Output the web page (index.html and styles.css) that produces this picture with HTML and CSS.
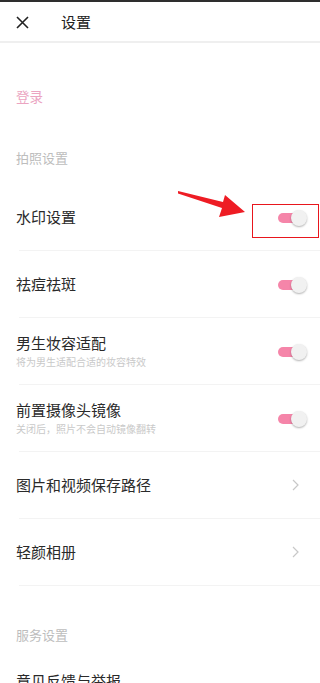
FILE: index.html
```html
<!DOCTYPE html>
<html lang="zh">
<head>
<meta charset="utf-8">
<link rel="stylesheet" href="styles.css">
</head>
<body>
<div class="page">
  <div class="topbar"></div>
  <header class="header">
    <svg class="close" width="13" height="13" viewBox="0 0 13 13"><path d="M1 1L12 12M12 1L1 12" stroke="#222" stroke-width="1.6" fill="none"/></svg>
    <span class="title">设置</span>
  </header>

  <div class="login">登录</div>
  <div class="section section1">拍照设置</div>

  <div class="item">
    <div class="text"><div class="label">水印设置</div></div>
    <span class="toggle"></span>
  </div>
  <div class="item">
    <div class="text"><div class="label">祛痘祛斑</div></div>
    <span class="toggle"></span>
  </div>
  <div class="item">
    <div class="text"><div class="label">男生妆容适配</div><div class="sub">将为男生适配合适的妆容特效</div></div>
    <span class="toggle"></span>
  </div>
  <div class="item">
    <div class="text"><div class="label">前置摄像头镜像</div><div class="sub">关闭后，照片不会自动镜像翻转</div></div>
    <span class="toggle"></span>
  </div>
  <div class="item">
    <div class="text"><div class="label">图片和视频保存路径</div></div>
    <svg class="chev" width="7" height="12" viewBox="0 0 7 12"><path d="M1 1L6 6L1 11" stroke="#c8c8c8" stroke-width="1.2" fill="none"/></svg>
  </div>
  <div class="item">
    <div class="text"><div class="label">轻颜相册</div></div>
    <svg class="chev" width="7" height="12" viewBox="0 0 7 12"><path d="M1 1L6 6L1 11" stroke="#c8c8c8" stroke-width="1.2" fill="none"/></svg>
  </div>

  <div class="section section2">服务设置</div>
  <div class="item last">
    <div class="text"><div class="label">意见反馈与举报</div></div>
  </div>

  <div class="redbox"></div>
  <svg class="arrow" width="80" height="40" viewBox="0 0 80 40">
    <polygon points="0,1 45,12 47,5 67,22 41,27 44,18 0,3.5" fill="#ee1c24"/>
  </svg>
</div>
</body>
</html>
```

FILE: styles.css
```css
* { box-sizing: border-box; }
html, body { margin: 0; padding: 0; background: #fff; }
body {
  font-family: "Noto Sans CJK SC", "Noto Sans", sans-serif;
  color: #333;
}
.page {
  position: relative;
  width: 320px;
  height: 683px;
  overflow: hidden;
  background: #fff;
}
.topbar { height: 2px; background: #2e2e2e; }
.header {
  height: 41px;
  display: flex;
  align-items: center;
  border-bottom: 2px solid #efefef;
}
.close { margin-left: 16px; margin-top: 2px; }
.title {
  margin-left: 32px;
  font-size: 15px;
  color: #222;
  line-height: 1;
}
.login {
  margin-top: 34px;
  height: 38px;
  display: flex;
  align-items: center;
  padding-left: 16px;
  font-size: 13.5px;
  color: #eba4c1;
}
.section {
  height: 40px;
  display: flex;
  align-items: center;
  padding-left: 16px;
  font-size: 13px;
  color: #bdbdbd;
}
.section1 { margin-top: 22px; margin-bottom: 7px; }
.item {
  height: 67px;
  margin-left: 19px;
  padding-right: 13px;
  display: flex;
  align-items: center;
  justify-content: space-between;
  border-bottom: 1px solid #f3f3f3;
}
.item.last { border-bottom: none; height: 54px; }
.text { margin-left: -3px; }
.label { font-size: 15px; color: #2a2a2a; line-height: 20px; }
.sub { font-size: 10px; color: #c9c9c9; line-height: 14px; margin-top: 2px; }
.toggle {
  position: relative;
  width: 29px;
  height: 16px;
  display: inline-block;
  margin-top: 2px;
}
.toggle::before {
  content: "";
  position: absolute;
  left: 0;
  top: 3px;
  width: 24px;
  height: 10px;
  border-radius: 5px;
  background: #f585a9;
}
.toggle::after {
  content: "";
  position: absolute;
  right: 0;
  top: 0;
  width: 16px;
  height: 16px;
  border-radius: 50%;
  background: #f1f1f1;
  box-shadow: 0 1px 2px rgba(0,0,0,0.3);
}
.chev { margin-right: 8px; }
.section2 { margin-top: 28px; }
.redbox {
  position: absolute;
  left: 252px;
  top: 204px;
  width: 67px;
  height: 34px;
  border: 1.5px solid #e8161d;
}
.arrow {
  position: absolute;
  left: 178px;
  top: 190px;
}
```
